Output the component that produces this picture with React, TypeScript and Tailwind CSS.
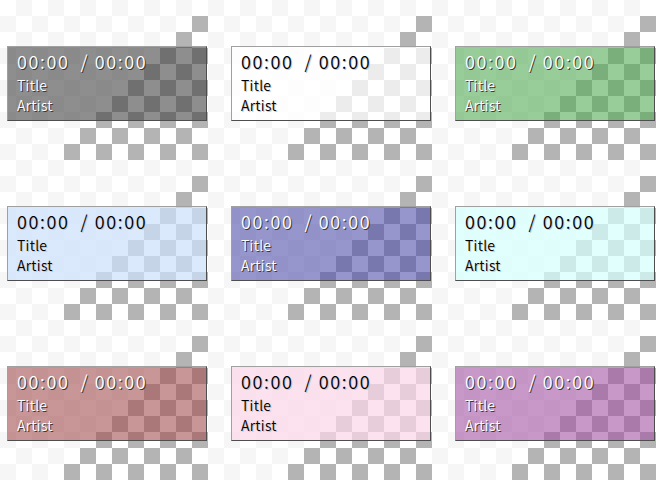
const cards = [
	{ bg: "bg-[rgba(67,67,67,0.6)]", dark: true },
	{ bg: "bg-[rgba(255,255,255,0.75)]", dark: false },
	{ bg: "bg-[rgba(83,170,83,0.6)]", dark: true },
	{ bg: "bg-[rgba(205,224,251,0.72)]", dark: false },
	{ bg: "bg-[rgba(80,80,170,0.6)]", dark: true },
	{ bg: "bg-[rgba(213,255,252,0.72)]", dark: false },
	{ bg: "bg-[rgba(163,80,80,0.6)]", dark: true },
	{ bg: "bg-[rgba(251,213,232,0.72)]", dark: false },
	{ bg: "bg-[rgba(163,83,163,0.6)]", dark: true },
];

const squares: { x: number; y: number; fill: string }[] = [];
for (let r = 0; r < 10; r++) {
	for (let c = 0; c < 14; c++) {
		if ((r + c) % 2 === 0) continue;
		const dark = c <= 12 && r + c >= 13;
		squares.push({ x: c * 16, y: r * 16, fill: dark ? "#b4b4b4" : "#f6f6f6" });
	}
}

function Checker() {
	return (
		<svg className="col-start-1 row-start-1" width={224} height={160} viewBox="0 0 224 160">
			<rect width={224} height={160} fill="#ffffff" />
			{squares.map((s) => (
				<rect key={`${s.x}-${s.y}`} x={s.x} y={s.y} width={16} height={16} fill={s.fill} />
			))}
		</svg>
	);
}

function Player({ bg, dark }: { bg: string; dark: boolean }) {
	const text = dark
		? "text-white [text-shadow:1px_1px_0_#3a3a3a]"
		: "text-black [text-shadow:1px_1px_0_#c8c8c8]";
	return (
		<div
			className={`col-start-1 row-start-1 ml-[7px] mt-[46px] h-[75px] w-[200px] border border-t-[#a0a0a0] border-l-[#a0a0a0] border-r-[#4e4e4e] border-b-[#4e4e4e] px-[9px] pt-[2px] font-[350] ${bg} ${text}`}
		>
			<div className="whitespace-pre text-[18px] leading-[24px] tracking-[1.6px]">00:00  / 00:00</div>
			<div className="mt-[2px] text-[14px] leading-[20px] tracking-[0.3px]">Title</div>
			<div className="text-[14px] leading-[20px] tracking-[0.3px]">Artist</div>
		</div>
	);
}

export default function App() {
	return (
		<div className="h-[480px] w-[656px] overflow-hidden bg-white font-['Noto_Sans_CJK_JP',sans-serif]">
			<div className="grid w-[672px] grid-cols-[224px_224px_224px]">
				{cards.map((c, i) => (
					<div key={i} className="grid h-[160px] w-[224px] items-start justify-items-start">
						<Checker />
						<Player bg={c.bg} dark={c.dark} />
					</div>
				))}
			</div>
		</div>
	);
}
